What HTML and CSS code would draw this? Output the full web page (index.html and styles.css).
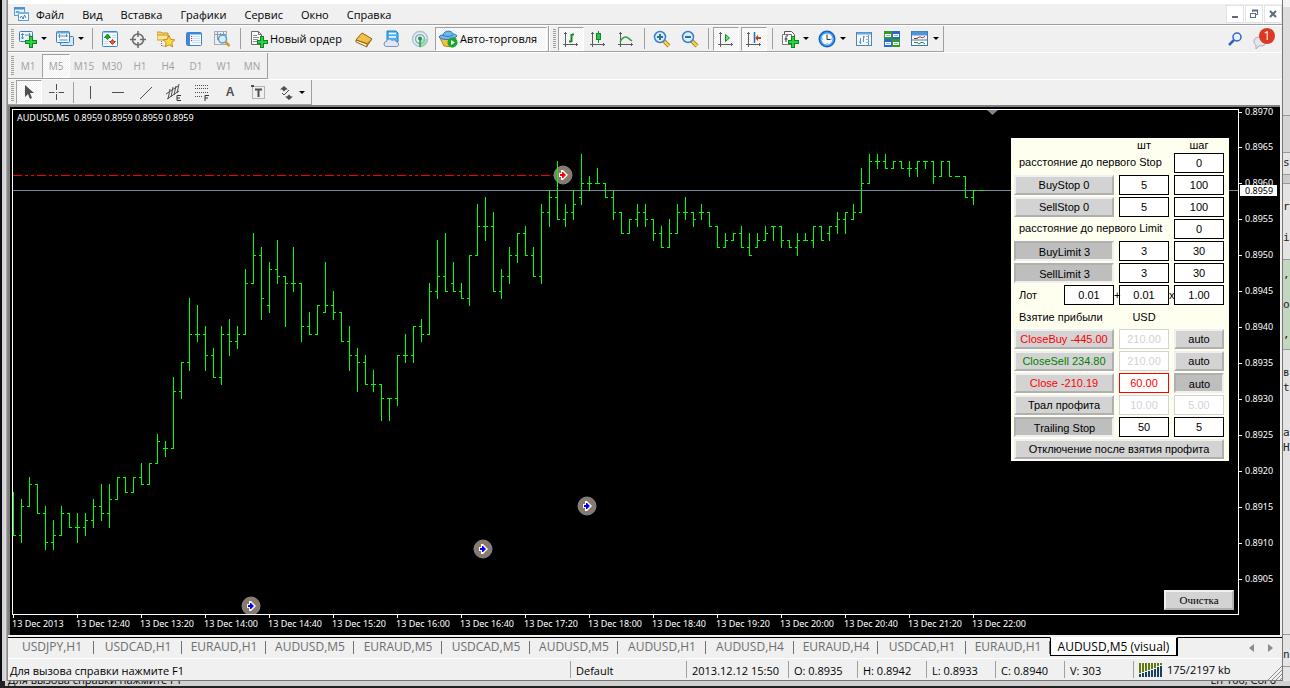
FILE: index.html
```html
<!DOCTYPE html>
<html lang="ru">
<head>
<meta charset="utf-8">
<title>AUDUSD,M5 (visual)</title>
<link rel="stylesheet" href="styles.css">
</head>
<body>
<div class="desktop">
<div class="behind-left"></div>

<main class="window">
  <div class="title-edge"></div>
  <header class="menubar">
    <svg class="app-icon" width="16" height="16" viewBox="0 0 16 16"><rect x="1.500" y="1.500" width="10" height="8" fill="#e8f4fc" stroke="#5b9bd0"/><path d="M1 2.500h11" stroke="#4a90cc" stroke-width="2"/><path d="M3 7l1-2 1 2 1-2" stroke="#4a90cc" fill="none"/><rect x="5.500" y="6.500" width="10" height="8" fill="#fff" stroke="#5b9bd0"/><path d="M5 7h11" stroke="#78b4e0" stroke-width="2"/><path d="M7 12l1.500-2 1.500 3 1.500-4 1.500 3" stroke="#3a80c0" fill="none"/></svg>
    <nav class="menu">
      <button>Файл</button><button>Вид</button><button>Вставка</button><button>Графики</button><button>Сервис</button><button>Окно</button><button>Справка</button>
    </nav>
    <div class="winbtns">
      <button aria-label="Свернуть"><svg width="10" height="10" viewBox="0 0 10 10"><path d="M2 8h6" stroke="#5f6b7a" stroke-width="2"/></svg></button>
      <button aria-label="Восстановить"><svg width="10" height="10" viewBox="0 0 10 10"><path d="M3.500 3V1.500h5v4H7" fill="none" stroke="#5f6b7a"/><path d="M3 1.500h6" stroke="#5f6b7a" stroke-width="2"/><rect x="1.500" y="4.500" width="5" height="4" fill="#fff" stroke="#5f6b7a"/></svg></button>
      <button aria-label="Закрыть"><svg width="10" height="10" viewBox="0 0 10 10"><path d="M2 2l6 6M8 2l-6 6" stroke="#5f6b7a" stroke-width="2"/></svg></button>
    </div>
  </header>

  <div class="bar-row">
    <div class="bar">
      <span class="grip"></span>
      <button class="tool drop" aria-label="Новый график"><svg width="18" height="18" viewBox="0 0 18 18"><rect x=".5" y="1.500" width="13" height="10" rx="1" fill="#e9f4fc" stroke="#3d7db5"/><path d="M3.500 3v6M2 4.500h3M2 8h3M10.500 3v4M6 5h6" stroke="#5a8fb8" fill="none"/><path d="M10 6h4v4h4v4h-4v4h-4v-4H6v-4h4z" fill="#0b8a1c"/><path d="M11 7h2v4h4v2h-4v4h-2v-4H7v-2h4z" fill="#2fd246"/></svg></button>
      <button class="tool drop" aria-label="Профили"><svg width="18" height="18" viewBox="0 0 18 18"><rect x="4.500" y="6.500" width="13" height="9" rx="1" fill="#d7e9f7" stroke="#3d7db5"/><rect x=".5" y="1.500" width="13" height="11" rx="1" fill="#f2f9fe" stroke="#3d7db5"/><path d="M1 2.500h12" stroke="#6aa7d6" stroke-width="2"/><path d="M3.500 4v4M10.500 4v3M2 6h10M3.500 10h8" stroke="#5a8fb8" fill="none"/></svg></button>
      <span class="sep"></span>
      <button class="tool" aria-label="Обзор рынка"><svg width="18" height="18" viewBox="0 0 18 18"><rect x="1.500" y="1.500" width="15" height="15" rx="1" fill="#f4faff" stroke="#3f86c6"/><path d="M2 2.500h14" stroke="#8cc3ee"/><path d="M6.500 4l3 3.500H8l-1.500 2L5 7.500H3.500z" fill="#1ca82c" stroke="#0d7f1b"/><path d="M11.500 14.500l-3-3H10l1.500-2 1.500 2h1.500z" fill="#e8602c" stroke="#b8380e"/><path d="M11 5.500h4M11 7.500h4M3 11.500h4M3 13.500h4" stroke="#c9dcec"/></svg></button>
      <button class="tool" aria-label="Окно данных"><svg width="18" height="18" viewBox="0 0 18 18"><circle cx="9" cy="9.500" r="5.500" fill="none" stroke="#6b6b6b" stroke-width="1.500"/><path d="M9 1v6M9 12v6M1 9.500h6M11 9.500h6" stroke="#6b6b6b" stroke-width="1.500"/></svg></button>
      <button class="tool" aria-label="Навигатор"><svg width="18" height="18" viewBox="0 0 18 18"><path d="M0 2h4l1 1h6v6H0z" fill="#f3d36a" stroke="#c79b2a"/><path d="M0 5h11v5H0z" fill="#fae59a" stroke="#c79b2a"/><path d="M4.500 11v5h4" stroke="#777" fill="none" stroke-dasharray="1 1"/><path d="M12 5.500l1.800 3.900 4 .5-3 2.800.8 4.100-3.600-2-3.600 2 .8-4.100-3-2.800 4-.5z" fill="#ffd84a" stroke="#c68e12"/></svg></button>
      <button class="tool" aria-label="Терминал"><svg width="18" height="18" viewBox="0 0 18 18"><rect x="1.500" y="2.500" width="15" height="13" rx="1" fill="#f4faff" stroke="#3f7fc0"/><path d="M2 3.500h14" stroke="#3c8adc" stroke-width="2"/><path d="M3.500 4v11" stroke="#3c8adc" stroke-width="3"/><path d="M7 6.500h8M7 8.500h8M7 10.500h8M7 12.500h8" stroke="#c6dcf0"/><path d="M6 6.500h1M6 8.500h1M6 10.500h1" stroke="#d24"/></svg></button>
      <button class="tool" aria-label="Тестер стратегий"><svg width="18" height="18" viewBox="0 0 18 18"><rect x="1.500" y="1.500" width="12" height="13" fill="#e9eff3" stroke="#a2adb5"/><path d="M4.500 2v8M10.500 2v4M7.500 3v3M2 4.500h11" stroke="#8c9aa5"/><circle cx="9.500" cy="9" r="4" fill="#d3ebfb" fill-opacity=".9" stroke="#5c9bd0" stroke-width="1.500"/><path d="M12.500 12l4 4" stroke="#d49a2c" stroke-width="2.500"/></svg></button>
      <span class="sep"></span>
      <button class="tool order"><svg width="18" height="18" viewBox="0 0 18 18"><path d="M1.500 1.500h7l3 3v10h-10z" fill="#fff" stroke="#6b6b6b"/><path d="M8.500 1.500v3h3" fill="none" stroke="#6b6b6b"/><path d="M3 5.500h4M3 7.500h6M3 9.500h5M3 11.500h4" stroke="#8a8a8a"/><path d="M10 6h4v4h4v4h-4v4h-4v-4H7v-4h3z" fill="#0b8a1c"/><path d="M11 7h2v4h4v2h-4v4h-2v-4H8v-2h3z" fill="#2fd246"/></svg>Новый ордер</button>
      <button class="tool" aria-label="MetaEditor"><svg width="18" height="18" viewBox="0 0 18 18"><path d="M1 10l6-7 10 6-5 7z" fill="#e2a92c" stroke="#8f6312"/><path d="M1 10l6-7 10 6-5 4.500z" fill="#f2c04a" stroke="#a8761a"/><path d="M1 10v2l11 5v-3z" fill="#fff5d0" stroke="#8f6312"/></svg></button>
      <button class="tool" aria-label="Сигналы MQL5"><svg width="18" height="18" viewBox="0 0 18 18"><path d="M4 1h9l2 2v9H4z" fill="#4db3ee" stroke="#1f7fc4"/><path d="M6 3.500h7" stroke="#fff" stroke-width="1.500"/><path d="M6 7h7" stroke="#fff" stroke-width="1.500"/><path d="M3.500 16.500a2.500 2.500 0 0 1 0-5 3 3 0 0 1 5.500-1 3 3 0 0 1 4.500 1.500 2.300 2.300 0 0 1 .5 4.500z" fill="#dfe7f4" stroke="#7d93b8"/></svg></button>
      <button class="tool" aria-label="Сигналы"><svg width="18" height="18" viewBox="0 0 18 18" fill="none"><circle cx="9" cy="9" r="7.500" stroke="#a7c6d4" stroke-width="1.500"/><circle cx="9" cy="9" r="4.500" stroke="#7fb0c6" stroke-width="1.500"/><path d="M9 9v8.500A8 8 0 0 0 16.500 9" fill="#8fd29b" fill-opacity=".7"/><path d="M9 9v8" stroke="#2b9a45" stroke-width="1.500"/><circle cx="9" cy="8.500" r="2" fill="#2b8a55"/></svg></button>
      <button class="tool auto pressed"><svg width="20" height="18" viewBox="0 0 20 18"><path d="M2 8l4 8 9 1 3-9z" fill="#f3c53c" stroke="#b8861a"/><path d="M1 7c1-2 3-2 4-2 1-5 9-5 10-1 2 0 4 1 4 2-3 4-15 5-18 1z" fill="#6fb7e6" stroke="#2d78b4"/><path d="M5 5c3 2 7 2 10 0" stroke="#2d78b4" fill="none"/><circle cx="14.500" cy="12.500" r="5" fill="#14a82c"/><path d="M13 10v5l4-2.500z" fill="#fff"/></svg>Авто-торговля</button>
    </div>
    <div class="bar">
      <span class="grip"></span>
      <button class="tool pressed" aria-label="Бары"><svg width="18" height="18" viewBox="0 0 18 18" fill="none"><path d="M3.500 2v15M1 14.500h15M2 3.500h3M14.500 13v3" stroke="#5c5c5c"/><path d="M9.500 4v8M10 4.500h2M7 11.500h2" stroke="#15862a" stroke-width="2"/></svg></button>
      <button class="tool" aria-label="Японские свечи"><svg width="18" height="18" viewBox="0 0 18 18" fill="none"><path d="M3.500 2v15M1 14.500h15M2 3.500h3M14.500 13v3" stroke="#5c5c5c"/><path d="M9.500 1v12" stroke="#15862a"/><rect x="7.500" y="3.500" width="4" height="6" fill="#2bc742" stroke="#15862a"/></svg></button>
      <button class="tool" aria-label="Линия"><svg width="18" height="18" viewBox="0 0 18 18" fill="none"><path d="M3.500 2v15M1 14.500h15M2 3.500h3M14.500 13v3" stroke="#5c5c5c"/><path d="M3 12c2-4 4-5 6-5s3 2 6 4" stroke="#33a046" stroke-width="1.500"/></svg></button>
      <span class="sep"></span>
      <button class="tool" aria-label="Увеличить"><svg width="18" height="18" viewBox="0 0 18 18"><path d="M11 11l5 5" stroke="#b8891e" stroke-width="4"/><path d="M11 11l5 5" stroke="#f5d75a" stroke-width="2"/><circle cx="7" cy="7" r="5.500" fill="#d9efff" stroke="#3c80c4" stroke-width="1.500"/><path d="M4 7h6M7 4v6" stroke="#2f6fb0" stroke-width="2"/></svg></button>
      <button class="tool" aria-label="Уменьшить"><svg width="18" height="18" viewBox="0 0 18 18"><path d="M11 11l5 5" stroke="#b8891e" stroke-width="4"/><path d="M11 11l5 5" stroke="#f5d75a" stroke-width="2"/><circle cx="7" cy="7" r="5.500" fill="#d9efff" stroke="#3c80c4" stroke-width="1.500"/><path d="M4 7h6" stroke="#2f6fb0" stroke-width="2"/></svg></button>
      <span class="sep"></span>
      <button class="tool pressed gap" aria-label="Автопрокрутка"><svg width="18" height="18" viewBox="0 0 18 18" fill="none"><path d="M3.500 2v15M1 14.500h15M2 3.500h3M14.500 13v3" stroke="#5c5c5c"/><path d="M8.500 4.500v7l4-3.500z" fill="#6fdc7c" stroke="#15862a"/></svg></button>
      <button class="tool pressed gap" aria-label="Сдвиг графика"><svg width="18" height="18" viewBox="0 0 18 18" fill="none"><path d="M3.500 2v15M1 14.500h15M2 3.500h3M14.500 13v3" stroke="#5c5c5c"/><path d="M9.500 2v11" stroke="#2272ae" stroke-width="1.500"/><path d="M10 8l3-3v2h3v2h-3v2z" fill="#c0441c"/></svg></button>
      <span class="sep"></span>
      <button class="tool drop" aria-label="Индикаторы"><svg width="18" height="18" viewBox="0 0 18 18"><path d="M3.500 1.500h7l3 3v8h-10z" fill="#fff" stroke="#555"/><path d="M1.500 4.500h9v10h-9z" fill="#fff" stroke="#777"/><path d="M7 6c-2-1-2 0-2 2v4M3.500 9h3" stroke="#333" fill="none"/><path d="M10 6h4v4h4v4h-4v4h-4v-4H7v-4h3z" fill="#0b8a1c"/><path d="M11 7h2v4h4v2h-4v4h-2v-4H8v-2h3z" fill="#2fd246"/></svg></button>
      <button class="tool drop" aria-label="Периоды"><svg width="18" height="18" viewBox="0 0 18 18"><circle cx="9" cy="9" r="8.500" fill="#1763c0"/><circle cx="9" cy="9" r="7" fill="#4aa3ee"/><circle cx="9" cy="9" r="5.500" fill="#f4f9fd"/><path d="M9 5v4.500h3.500" fill="none" stroke="#333"/><path d="M9 4v1M9 13v1M4 9h1M13 9h1" stroke="#888"/></svg></button>
      <button class="tool" aria-label="Шаблоны"><svg width="18" height="18" viewBox="0 0 18 18"><rect x="1.500" y="2.500" width="15" height="13" fill="#f2f8fc" stroke="#4d87b8"/><path d="M2 3.500h14" stroke="#6ba8da" stroke-width="2"/><path d="M5.500 8v6M4 12h1M8.500 6v6M9 7h1M13.500 5v10" stroke="#5f93bd"/><path d="M11 6.500h3M11 9.500h3M11 12.500h3" stroke="#8fb4d0"/></svg></button>
      <button class="tool" aria-label="Расположение окон"><svg width="18" height="18" viewBox="0 0 18 18"><path d="M1 1h8v8H1zM9 9h8v8H9z" fill="#2f9e22"/><path d="M9 1h8v8H9zM1 9h8v8H1z" fill="#2a66cc"/><path d="M2 4h6v3H2zM10 4h6v3h-6zM2 12h6v3H2zM10 12h6v3h-6z" fill="#f6fbff"/><path d="M3 5.500h4M11 5.500h4M3 13.500h4M11 13.500h4" stroke="#9ab"/></svg></button>
      <button class="tool drop" aria-label="Список графиков"><svg width="18" height="18" viewBox="0 0 18 18"><rect x=".5" y="1.500" width="16" height="14" fill="#fff" stroke="#3c78ae"/><path d="M1 3.500h15" stroke="#4f97d8" stroke-width="4"/><path d="M1 10h15" stroke="#3c78ae"/><path d="M3 8.500h3l2-1.500h2l1 1 3-1.500" stroke="#9c3a20" fill="none"/><path d="M3 12.500h3l2 1.500 2-1.500h2l2 1.500" stroke="#228a36" fill="none"/></svg></button>
    </div>
    <div class="bar-right">
      <button class="tool search" aria-label="Поиск"><svg width="16" height="16" viewBox="0 0 16 16"><circle cx="10" cy="6" r="4" fill="#e6f0ff" stroke="#2f62d0" stroke-width="1.500"/><path d="M7 9l-5 5" stroke="#2f62d0" stroke-width="2.500"/></svg></button>
      <button class="chat" aria-label="Сообщения"><svg width="22" height="22" viewBox="0 0 22 22"><path d="M1 13c0-3 3-4 6-4s6 2 6 5-3 4-7 4l-3 3v-4c-1-.5-2-2-2-4z" fill="#e4e4ea" stroke="#a9a9b2"/></svg><span class="badge">1</span></button>
    </div>
  </div>

  <div class="bar-row">
    <div class="bar frames">
      <span class="grip"></span>
      <button class="tool">M1</button><button class="tool pressed">M5</button><button class="tool">M15</button><button class="tool">M30</button><button class="tool">H1</button><button class="tool">H4</button><button class="tool">D1</button><button class="tool">W1</button><button class="tool">MN</button>
    </div>
  </div>

  <div class="bar-row last">
    <div class="bar lines">
      <span class="grip"></span>
      <button class="tool pressed" aria-label="Курсор"><svg width="18" height="18" viewBox="0 0 18 18"><path d="M5 2v12l3-3 2 5 2-1-2-5h4z" fill="#4f4f4f"/></svg></button>
      <button class="tool" aria-label="Перекрестие"><svg width="18" height="18" viewBox="0 0 18 18"><path d="M9.500 1v6M9.500 11v6M2 9.500h5.500M11.500 9.500H17M9 9.500h1" stroke="#4f4f4f"/></svg></button>
      <span class="sep"></span>
      <button class="tool" aria-label="Вертикальная линия"><svg width="18" height="18" viewBox="0 0 18 18"><path d="M9.500 3v13" stroke="#4f4f4f"/></svg></button>
      <button class="tool" aria-label="Горизонтальная линия"><svg width="18" height="18" viewBox="0 0 18 18"><path d="M3 9.500h12" stroke="#4f4f4f"/></svg></button>
      <button class="tool" aria-label="Трендовая линия"><svg width="18" height="18" viewBox="0 0 18 18"><path d="M3 16L15 4" stroke="#4f4f4f"/></svg></button>
      <button class="tool" aria-label="Канал"><svg width="18" height="18" viewBox="0 0 18 18"><path d="M1 11l12-8M2 16l12-8M5 6L3 16M8 4L6 14M11 3L9 12M14 1l-2 9" stroke="#4f4f4f" fill="none"/><path d="M16 12.500h-4v5h4M12 15h3" stroke="#333" fill="none"/></svg></button>
      <button class="tool" aria-label="Фибоначчи"><svg width="18" height="18" viewBox="0 0 18 18"><path d="M2 2.500h14M2 5.500h14M2 9.500h14M2 13.500h8" stroke="#4f4f4f" stroke-dasharray="1 1"/><path d="M16 12.500h-4V18M12 15h3" stroke="#333" fill="none"/></svg></button>
      <button class="tool letter">A</button>
      <button class="tool" aria-label="Текстовая метка"><svg width="18" height="18" viewBox="0 0 18 18"><rect x="3.500" y="3.500" width="12" height="12" fill="none" stroke="#777" stroke-dasharray="1 1"/><path d="M6 6.500h7M9.500 7v7" stroke="#4f4f4f" stroke-width="2"/><path d="M2 2h3v2H2z" fill="#4f4f4f"/></svg></button>
      <button class="tool drop" aria-label="Стрелки"><svg width="18" height="18" viewBox="0 0 18 18"><path d="M7 3l4 3.500H9l-2 2-2-2H3z" fill="#4f4f4f"/><path d="M12 17l-4-3.500h2l2-2 2 2h2z" fill="#4f4f4f"/><path d="M5 10l2 2 5-5" stroke="#4f4f4f" fill="none"/></svg></button>
    </div>
  </div>

  <section class="chart">
    <div class="plot">
      <svg class="bars" id="bars"></svg>
      <div class="caption">AUDUSD,M5&nbsp; 0.8959 0.8959 0.8959 0.8959</div>
      <form class="panel">
        <span class="head units">шт</span><span class="head step">шаг</span>
        <label class="wide" for="stopGap">расстояние до первого Stop</label><input id="stopGap" value="0">
        <button type="button">BuyStop 0</button><input aria-label="BuyStop шт" value="5"><input aria-label="BuyStop шаг" value="100">
        <button type="button">SellStop 0</button><input aria-label="SellStop шт" value="5"><input aria-label="SellStop шаг" value="100">
        <label class="wide" for="limitGap">расстояние до первого Limit</label><input id="limitGap" value="0">
        <button type="button" class="down">BuyLimit 3</button><input aria-label="BuyLimit шт" value="3"><input aria-label="BuyLimit шаг" value="30">
        <button type="button" class="down">SellLimit 3</button><input aria-label="SellLimit шт" value="3"><input aria-label="SellLimit шаг" value="30">
        <div class="lot"><label for="lot">Лот</label><input id="lot" value="0.01"></div><div class="op"><span>+</span><input aria-label="Прибавка лота" value="0.01"></div><div class="op"><span>x</span><input aria-label="Множитель лота" value="1.00"></div>
        <span class="label">Взятие прибыли</span><span class="center">USD</span><span></span>
        <button type="button" class="red">CloseBuy -445.00</button><input class="off" aria-label="CloseBuy USD" value="210.00"><button type="button">auto</button>
        <button type="button" class="green">CloseSell 234.80</button><input class="off" aria-label="CloseSell USD" value="210.00"><button type="button">auto</button>
        <button type="button" class="red">Close -210.19</button><input class="alert" aria-label="Close USD" value="60.00"><button type="button" class="down">auto</button>
        <button type="button">Трал профита</button><input class="off" aria-label="Трал профита USD" value="10.00"><input class="off" aria-label="Трал профита шаг" value="5.00">
        <button type="button" class="down">Trailing Stop</button><input aria-label="Trailing Stop" value="50"><input aria-label="Trailing Stop шаг" value="5">
        <button type="button" class="full">Отключение после взятия профита</button>
      </form>
      <button class="clear">Очистка</button>
    </div>
    <ol class="prices">
      <li>0.8970</li><li>0.8965</li><li>0.8960</li><li>0.8955</li><li>0.8950</li><li>0.8945</li><li>0.8940</li><li>0.8935</li><li>0.8930</li><li>0.8925</li><li>0.8920</li><li>0.8915</li><li>0.8910</li><li>0.8905</li>
      <li class="last-price">0.8959</li>
    </ol>
    <ol class="times">
      <li>13 Dec 2013</li><li>13 Dec 12:40</li><li>13 Dec 13:20</li><li>13 Dec 14:00</li><li>13 Dec 14:40</li><li>13 Dec 15:20</li><li>13 Dec 16:00</li><li>13 Dec 16:40</li><li>13 Dec 17:20</li><li>13 Dec 18:00</li><li>13 Dec 18:40</li><li>13 Dec 19:20</li><li>13 Dec 20:00</li><li>13 Dec 20:40</li><li>13 Dec 21:20</li><li>13 Dec 22:00</li>
    </ol>
  </section>

  <nav class="tabs">
    <button class="short">USDJPY,H1</button><button>USDCAD,H1</button><button class="short">EURAUD,H1</button><button>AUDUSD,M5</button><button>EURAUD,M5</button><button>USDCAD,M5</button><button>AUDUSD,M5</button><button>AUDUSD,H1</button><button>AUDUSD,H4</button><button class="short">EURAUD,H4</button><button>USDCAD,H1</button><button class="short">EURAUD,H1</button><button class="active">AUDUSD,M5 (visual)</button>
    <div class="scroll">
      <button aria-label="Назад"><svg width="5" height="8" viewBox="0 0 5 8"><path d="M5 0v8L0 4z" fill="#8a8a8a"/></svg></button>
      <button aria-label="Вперёд"><svg width="5" height="8" viewBox="0 0 5 8"><path d="M0 0v8l5-4z" fill="#8a8a8a"/></svg></button>
    </div>
  </nav>

  <footer class="status">
    <span class="help">Для вызова справки нажмите F1</span>
    <span class="profile">Default</span>
    <span class="date">2013.12.12 15:50</span>
    <span class="ohlc">O: 0.8935</span><span class="ohlc">H: 0.8942</span><span class="ohlc">L: 0.8933</span><span class="ohlc">C: 0.8940</span><span class="ohlc">V: 303</span>
    <span class="traffic"><svg width="24" height="14" viewBox="0 0 24 14"><path d="M1 0v10M4 0v9M7 0v8M10 0v7M13 0v6M16 0v5M19 0v3M22 0v2" stroke="#5f7a10" stroke-width="2"/><path d="M1 11v3M4 10v4M7 9v5M10 8v6M13 7v7M16 6v8M19 4v10M22 3v11" stroke="#17425f" stroke-width="2"/></svg>175/2197 kb</span>
    <svg class="sizer" width="14" height="14" viewBox="0 0 14 14"><path d="M0 14L14 0M4 14L14 4M8 14l6-6M12 14l2-2" stroke="#8c8c8c"/></svg>
  </footer>
</main>

<aside class="behind-right" aria-hidden="true">
  <p class="g0"></p><p class="g1"></p><p class="g2">s\</p><p class="g3"></p><p class="g4">ri</p><p class="g5">ia</p><p class="g6">,8<br>o,<br>,2</p><p class="g7">вя</p><p class="g8">tI</p><p class="g9">an<br>HT</p><p class="g10">ns</p>
</aside>
<div class="behind-bottom" aria-hidden="true"><span>Для вызова справки нажмите F1</span><span class="pos">Ln 100, Col 6</span></div>
</div>
<script src="chart.js"></script>
</body>
</html>
```
FILE: styles.css
```css
* { box-sizing: border-box; }
body { margin: 0; background: #222; font-family: "Open Sans", "Noto Sans", sans-serif; font-size: 11px; color: #000; }
button { margin: 0; padding: 0; border: 0; background: none; font: inherit; color: inherit; white-space: nowrap; }
svg { display: block; flex: none; }
ol, p { margin: 0; padding: 0; list-style: none; }

.desktop { display: grid; grid-template-columns: 8px minmax(0, 1fr) 7px; grid-template-rows: minmax(0, 1fr) 7px; height: 100vh; min-height: 560px; overflow: hidden; }
.behind-left { background: linear-gradient(to right, #0a0d14 2px, #cfcfcf 2px, #dcdcdc 6px, #777 7px, #999 8px); }

.window { display: flex; flex-direction: column; background: #f0f0f0; border-right: 1px solid #777; }
.title-edge { height: 4px; background: #fff; }

.menubar { display: flex; align-items: center; height: 21px; padding-left: 5px; border-bottom: 1px solid #a0a0a0; }
.menu { display: flex; flex: 1; gap: 18px; padding-left: 7px; }
.winbtns { display: flex; gap: 1px; background: #fff; }
.winbtns button { display: grid; place-items: center; width: 18px; height: 18px; background: #fff; border: 1px solid #e2e2e2; }

.bar-row { display: flex; height: 27px; border-top: 1px solid #fff; }
.bar-row.last { height: 26px; }
.bar { display: flex; align-items: center; padding-left: 3px; border-right: 1px solid #a0a0a0; border-bottom: 1px solid #a0a0a0; }
.bar + .bar { border-left: 1px solid #fff; }
.grip { width: 3px; height: 20px; background: repeating-linear-gradient(#a0a0a0 0 1px, #f0f0f0 1px 2px); }
.grip + .pressed { margin-left: 2px; width: 26px; }
.tool { display: flex; align-items: center; justify-content: center; width: 28px; height: 24px; }
.pressed { border: 1px solid #fff; border-top-color: #a0a0a0; border-left-color: #a0a0a0; background: repeating-conic-gradient(#fff 0 25%, #f0f0f0 0 50%) 0 0 / 2px 2px; }
.pressed.gap { width: 26px; margin: 0 1px; }
.drop { width: 37px; gap: 4px; justify-content: flex-start; padding-left: 5px; }
.drop::after { content: ""; border: 3px solid transparent; border-top-color: #000; border-bottom: 0; }
.sep { width: 8px; height: 21px; background: linear-gradient(#a0a0a0, #a0a0a0) center / 1px 100% no-repeat; }
.order { width: 106px; gap: 2px; justify-content: flex-start; padding-left: 6px; }
.auto { width: 112px; gap: 2px; margin: 0 1px; justify-content: flex-start; padding-left: 2px; }
.bar-right { display: flex; flex: 1; align-items: center; justify-content: flex-end; padding-right: 7px; }
.search { margin-right: 4px; }
.chat { position: relative; width: 22px; height: 22px; }
.badge { position: absolute; top: 0; right: 0; width: 16px; height: 16px; border-radius: 50%; background: #dd3820; color: #fff; font-size: 12px; line-height: 16px; text-align: center; }
.frames { color: #a0a0a0; font-size: 10px; padding-right: 1px; }
.lines { padding-right: 2px; }
.lines .sep { width: 6px; }
.letter { font: bold 12px "Liberation Sans", sans-serif; color: #4f4f4f; }

.chart { flex: 1; min-height: 0; display: grid; grid-template-columns: minmax(0, 1fr) 41px; grid-template-rows: minmax(0, 1fr) 20px; margin: 0 2px 0 0; padding: 2px 0 0 2px; background: #000; border-top: 2px solid #808080; border-left: 2px solid #808080; color: #fff; font-family: "Noto Sans", sans-serif; font-size: 9px; }
.plot { position: relative; border: 1px solid #fff; overflow: hidden; }
.bars { width: 100%; height: 100%; }
.caption { position: absolute; top: 2px; left: 4px; line-height: 12px; }
.prices { position: relative; }
.prices li { display: flex; align-items: center; gap: 3px; height: 36px; line-height: 12px; }
.prices li:first-child { height: 20px; margin-top: -7px; margin-bottom: 7px; }
.prices li::before { content: ""; width: 3px; height: 1px; background: #fff; }
.prices .last-price { position: absolute; top: 76px; left: 1px; width: 37px; height: 11px; padding-left: 5px; background: #fff; color: #000; }
.prices .last-price::before { display: none; }
.times { display: flex; grid-column: 1 / -1; overflow: hidden; }
.times li { flex: none; width: 64px; line-height: 12px; white-space: nowrap; }
.times li::before { content: ""; display: block; width: 1px; height: 3px; margin-left: 1px; background: #fff; }

.panel { position: absolute; top: 28px; right: 9px; display: grid; grid-template-columns: 100px 50px 50px; grid-template-rows: 15px; grid-auto-rows: 22px; column-gap: 5px; align-items: start; padding: 0 5px 0 3px; background: #fffff0; color: #000; font: 11px "Liberation Sans", Arial, sans-serif; }
.panel button, .clear { height: 20px; background: #d3d3d3; border: 2px solid #b0b0b0; border-top-color: #f0f0f0; border-left-color: #f0f0f0; }
.panel button.down { background: #bebebe; border-color: #f0f0f0; border-top-color: #b0b0b0; border-left-color: #b0b0b0; padding: 2px 0 0 1px; }
.panel input { width: 50px; height: 20px; margin: 0; padding: 0; border: 1px solid #000; border-radius: 0; background: #fff; font: inherit; color: #000; text-align: center; }
.panel .off { color: #d3d3d3; border-color: #d3d3d3; }
.panel .alert { color: #f00; border-color: #f00; }
.panel .red { color: #f00; }
.panel .green { color: #008000; }
.panel label, .panel .label { padding-left: 5px; line-height: 20px; white-space: nowrap; }
.panel .wide { grid-column: span 2; line-height: 18px; }
.panel .full { grid-column: 1 / -1; width: 210px; }
.head { text-align: center; line-height: 15px; }
.units { grid-column: 2; }
.center { text-align: center; line-height: 20px; }
.lot { display: flex; justify-content: space-between; }
.op { position: relative; line-height: 20px; }
.op span { position: absolute; left: -5px; }
.clear { position: absolute; right: 4px; bottom: 4px; width: 70px; color: #000; font: 11px "Liberation Serif", serif; }

.tabs { display: flex; height: 21px; margin-top: 2px; padding-left: 2px; border-top: 1px solid #000; color: #6e6e6e; }
.tabs > button { position: relative; flex: none; width: 88px; height: 18px; line-height: 18px; font-size: 12px; }
.tabs > .short { width: 84px; }
.tabs > button:not(.active)::after { content: ""; position: absolute; right: 0; top: 3px; width: 1px; height: 13px; background: #707070; }
.tabs > .active { width: 128px; height: 19px; margin-top: -1px; background: #fff; color: #000; border: 1px solid #000; border-top-color: #fff; border-right-width: 2px; }
.scroll { display: flex; flex: 1; align-items: center; justify-content: flex-end; gap: 14px; padding-right: 9px; }

.status { position: relative; display: flex; align-items: stretch; height: 23px; border-top: 1px solid #fff; border-bottom: 1px solid #777; padding: 2px 0; line-height: 19px; white-space: nowrap; }
.status span { padding-left: 5px; border-left: 1px solid #a0a0a0; }
.status .help { flex: 1; border-left: 0; padding-left: 2px; }
.status .profile { width: 116px; }
.status .date { width: 102px; }
.status .ohlc { width: 69px; }
.status .traffic { display: flex; align-items: center; gap: 4px; width: 149px; }
.sizer { position: absolute; right: 0; bottom: 0; }

.behind-right { background: #e4e4e4; overflow: hidden; color: #222; font: 11px/15px "DejaVu Sans Mono", monospace; }
.behind-right p { overflow: hidden; border-bottom: 1px solid #999; }
.behind-right .g0 { height: 116px; background: linear-gradient(#f4f4f4 7px, #ddd 7px); }
.behind-right .g1 { height: 37px; background: #d4d4d4; }
.behind-right .g2 { height: 22px; padding-top: 2px; }
.behind-right .g3 { height: 9px; background: #ccc; }
.behind-right .g4 { height: 46px; padding-top: 15px; border: 0; }
.behind-right .g5 { height: 30px; }
.behind-right .g6 { height: 90px; line-height: 30px; background: #c3d6c0; }
.behind-right .g7 { height: 30px; padding-top: 15px; border: 0; }
.behind-right .g8 { height: 45px; border: 0; }
.behind-right .g9 { height: 210px; }
.behind-right .g10 { height: 32px; padding-top: 12px; }
.behind-bottom { grid-column: 1 / -1; display: flex; justify-content: space-between; align-items: flex-end; height: 5px; margin-left: 5px; padding: 0 14px 0 3px; overflow: hidden; background: #d0d0d0; line-height: 12px; }
```
FILE: chart.js
```js
// Open, high, low, close of each five-minute bar, in points above 0.8900.
const BARS = [
  [17,17,11,11],[11,16,10,15],[15,19,15,18],[18,18,14,14],[14,15,9,10],[10,13,9,11],[11,15,11,14],[14,14,12,12],
  [12,14,10,12],[12,14,11,13],[13,16,12,15],[15,18,13,14],[14,18,12,16],[16,19,16,19],[19,19,17,17],[17,19,17,19],
  [19,21,18,18],[18,21,18,21],[21,25,21,24],[23,24,22,23],[23,33,23,31],[31,35,30,35],[35,44,34,39],[39,43,38,39],
  [39,40,34,36],[36,37,33,33],[33,40,32,39],[39,41,36,38],[38,40,37,39],[39,48,39,46],[46,53,46,50],[50,51,41,44],
  [43,49,42,48],[48,52,46,47],[47,47,40,46],[46,51,45,46],[46,46,38,40],[40,42,39,39],[39,43,39,43],[42,49,42,43],
  [43,45,41,42],[42,42,38,38],[38,40,34,36],[36,37,31,35],[35,36,32,32],[32,34,31,32],[32,32,27,30],[30,30,27,30],
  [30,36,29,36],[36,39,35,36],[36,40,35,40],[40,41,38,39],[39,46,39,45],[45,52,44,47],[47,53,45,45],[46,49,45,45],
  [45,46,44,44],[44,50,43,50],[50,57,50,54],[54,58,52,54],[54,56,45,45],[45,48,44,47],[47,51,46,50],[50,53,49,53],
  [53,54,50,50],[50,51,47,47],[47,57,46,56],[56,59,54,58],[58,63,55,55],[55,57,54,56],[56,59,55,57],[58,64,57,60],
  [60,61,59,60],[60,62,60,60],[60,60,58,58],[58,59,55,56],[56,56,53,53],[53,55,53,55],[55,57,54,56],[56,57,54,55],
  [55,55,52,53],[53,54,51,51],[51,55,51,53],[53,57,53,56],[56,58,55,56],[56,56,54,55],[56,57,55,56],[56,56,54,54],
  [54,54,51,51],[51,53,51,52],[52,53,52,53],[53,54,51,51],[51,53,50,50],[51,53,51,52],[52,54,52,53],[54,54,52,54],
  [54,54,51,52],[52,52,51,51],[51,53,50,52],[52,53,52,52],[52,54,51,54],[54,54,52,52],[53,54,52,54],[54,56,53,55],
  [55,56,53,56],[55,57,55,56],[56,62,56,60],[60,64,60,63],[63,64,62,63],[63,64,62,62],[62,63,62,63],[63,63,62,62],
  [62,63,61,62],[62,63,61,63],[63,63,62,63],[63,63,60,61],[61,63,61,63],[63,63,61,61],[61,61,61,61],[61,61,58,58],
  [58,59,57,59],[59,59,59,59]
];
const STEP = 8;
const y = p => Math.round(80 + (59 - p) * 7.18) + 0.5;

// Filled one-pixel rectangles keep every stem and tick sharp.
let path = "";
const rect = (x, top, w, h) => { path += `M${x} ${top}h${w}v${h}h${-w}z`; };
BARS.forEach(([open, high, low, close], i) => {
  const x = i * STEP;
  const top = y(high) - 0.5;
  rect(x, top, 1, y(low) + 0.5 - top);
  rect(x - 2, y(open) - 0.5, 2, 1);
  rect(x + 1, y(close) - 0.5, 2, 1);
});

const marker = (x, cy, color) => `
  <circle cx="${x}" cy="${cy}" r="9" fill="#8b7a6a" stroke="#778899"/>
  <path d="M${x - 4} ${cy - 2}h2v-3h2l5 5-5 5h-2v-3h-2z" fill="#fff"/>
  <path d="M${x - 3} ${cy - 1}h2v-2h1l3 3-3 3h-1v-2h-2z" fill="${color}"/>`;

document.getElementById("bars").innerHTML = `
  <path d="M974 0h11l-5.5 5z" fill="#778899"/>
  <path d="M0 65.5H550" stroke="#f00" stroke-dasharray="9 3 3 3 3 3"/>
  ${marker(550, 65, "#f00")}${marker(574, 396, "#00f")}${marker(470, 439, "#00f")}${marker(238, 496, "#00f")}
  <path d="M0 80.5H4000" stroke="#778899"/>
  <path d="${path}" fill="#0f0"/>`;
```
